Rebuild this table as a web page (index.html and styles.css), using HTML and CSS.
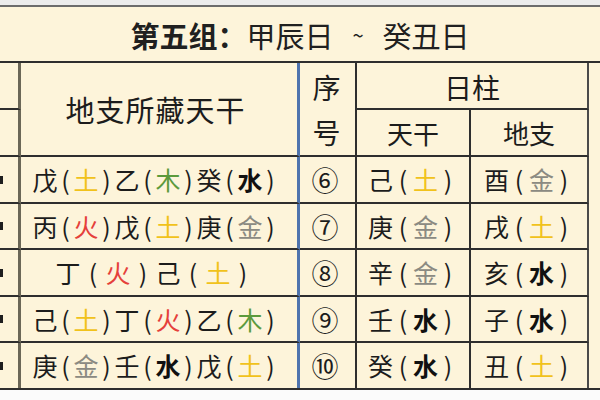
FILE: index.html
```html
<!DOCTYPE html>
<html lang="zh-CN">
<head>
<meta charset="utf-8">
<title>第五组：甲辰日 ~ 癸丑日</title>
<link rel="stylesheet" href="styles.css">
</head>
<body>
<div class="topbar"></div>
<div class="sheet">
  <div class="title"><b class="strong">第五组：</b>甲辰日<span class="tilde">~</span>癸丑日</div>
  <div class="grid">
    <div class="c0 h1"></div>
    <div class="hd-cang">地支所藏天干</div>
    <div class="hd-xu"><span>序</span><span>号</span></div>
    <div class="hd-rz">日柱</div>
    <div class="side"></div>
    <div class="c0 h2"></div>
    <div class="hd-sub gan">天干</div>
    <div class="hd-sub zhi">地支</div>

    <div class="c0"><span class="tick"></span></div>
    <div class="c1 mix">戊<span class="p">(</span><span class="tu">土</span><span class="p">)</span>乙<span class="p">(</span><span class="mu">木</span><span class="p">)</span>癸<span class="p">(</span><span class="shui">水</span><span class="p">)</span></div>
    <div class="c2">⑥</div>
    <div class="c3 pillar">己<span class="p">(</span><span class="tu">土</span><span class="p">)</span></div>
    <div class="c4 pillar">酉<span class="p">(</span><span class="jin">金</span><span class="p">)</span></div>

    <div class="c0"><span class="tick"></span></div>
    <div class="c1 mix">丙<span class="p">(</span><span class="huo">火</span><span class="p">)</span>戊<span class="p">(</span><span class="tu">土</span><span class="p">)</span>庚<span class="p">(</span><span class="jin">金</span><span class="p">)</span></div>
    <div class="c2">⑦</div>
    <div class="c3 pillar">庚<span class="p">(</span><span class="jin">金</span><span class="p">)</span></div>
    <div class="c4 pillar">戌<span class="p">(</span><span class="tu">土</span><span class="p">)</span></div>

    <div class="c0"><span class="tick"></span></div>
    <div class="c1 wide">丁<span class="p">(</span><span class="huo">火</span><span class="p">)</span>己<span class="p">(</span><span class="tu">土</span><span class="p">)</span></div>
    <div class="c2">⑧</div>
    <div class="c3 pillar">辛<span class="p">(</span><span class="jin">金</span><span class="p">)</span></div>
    <div class="c4 pillar">亥<span class="p">(</span><span class="shui">水</span><span class="p">)</span></div>

    <div class="c0"><span class="tick"></span></div>
    <div class="c1 mix">己<span class="p">(</span><span class="tu">土</span><span class="p">)</span>丁<span class="p">(</span><span class="huo">火</span><span class="p">)</span>乙<span class="p">(</span><span class="mu">木</span><span class="p">)</span></div>
    <div class="c2">⑨</div>
    <div class="c3 pillar">壬<span class="p">(</span><span class="shui">水</span><span class="p">)</span></div>
    <div class="c4 pillar">子<span class="p">(</span><span class="shui">水</span><span class="p">)</span></div>

    <div class="c0 last"><span class="tick"></span></div>
    <div class="c1 mix last">庚<span class="p">(</span><span class="jin">金</span><span class="p">)</span>壬<span class="p">(</span><span class="shui">水</span><span class="p">)</span>戊<span class="p">(</span><span class="tu">土</span><span class="p">)</span></div>
    <div class="c2 last">⑩</div>
    <div class="c3 pillar last">癸<span class="p">(</span><span class="shui">水</span><span class="p">)</span></div>
    <div class="c4 pillar last">丑<span class="p">(</span><span class="tu">土</span><span class="p">)</span></div>
  </div>
</div>
</body>
</html>
```

FILE: styles.css
```css
* { box-sizing: border-box; }

html, body {
  margin: 0;
  padding: 0;
  width: 600px;
  height: 400px;
  overflow: hidden;
  background: #fbfbfb;
  font-family: "Noto Sans CJK SC", "Noto Sans", sans-serif;
  color: #1c1c1c;
}

.topbar {
  height: 5px;
  background: #ececec;
}

.sheet {
  background: #fdf4da;
  border-top: 2px solid #6c6c6c;
}

.title {
  height: 54px;
  display: flex;
  align-items: center;
  justify-content: center;
  font-size: 29px;
  line-height: 1;
  font-weight: 400;
  color: #202020;
  padding-top: 2px;
}

.title .strong {
  font-weight: 700;
}

.title .tilde {
  display: inline-block;
  width: 49px;
  text-align: center;
  font-size: 20px;
}

.grid {
  display: grid;
  grid-template-columns: 21px 279px 57px 114px 118px 11px;
  grid-template-rows: 47px 47px 47px 46px 47px 46px 45px;
  border-top: 2px solid #2e2e2e;
  border-bottom: 2px solid #2e2e2e;
}

.grid > div {
  display: flex;
  align-items: center;
  justify-content: center;
  line-height: 1;
  white-space: nowrap;
}

/* row lines */
.c0, .c1, .c2, .c3, .c4,
.h1, .h2, .hd-cang, .hd-xu, .hd-rz, .hd-sub {
  border-bottom: 2px solid #2e2e2e;
}
.grid > .last { border-bottom: none; }

/* column lines */
.grid > .c0 {
  border-right: 3px solid #6b6757;
  justify-content: flex-start;
}
.c1, .hd-cang {
  border-right: 3px solid #4f74ae;
  padding-right: 7px;
}
.c2, .hd-xu { border-right: 2px solid #2e2e2e; }
.c3, .gan { border-right: 2px solid #2e2e2e; }
.c4, .zhi, .hd-rz { border-right: 2px solid #4a4a4a; }

/* header placement */
.h1 { grid-column: 1; grid-row: 1; }
.h2 { grid-column: 1; grid-row: 2; }
.hd-cang {
  grid-column: 2;
  grid-row: 1 / span 2;
  font-size: 29px;
  letter-spacing: 1px;
}
.hd-xu {
  grid-column: 3;
  grid-row: 1 / span 2;
  flex-direction: column;
  gap: 17px;
  font-size: 28px;
  padding-right: 2px;
}
.hd-rz {
  grid-column: 4 / span 2;
  grid-row: 1;
  font-size: 28px;
  padding-top: 2px;
}
.side {
  grid-column: 6;
  grid-row: 1 / span 7;
}
.gan { grid-column: 4; grid-row: 2; font-size: 26px; }
.zhi { grid-column: 5; grid-row: 2; font-size: 26px; }

/* body cells */
.tick {
  display: block;
  width: 3px;
  height: 8px;
  background: #1e1e1e;
}

.c1, .c3, .c4 { font-size: 25px; }
.c2 {
  font-size: 27px;
  padding-right: 5px;
}

.p {
  display: inline-block;
  text-align: center;
  color: #1c1c1c;
}
.mix .p { width: 16px; }
.wide .p { width: 25px; }
.pillar .p { width: 20px; }

.tu { color: #f1c21b; }
.mu { color: #5c9a3c; }
.huo { color: #e5403a; }
.jin { color: #8b8a82; }
.shui { color: #111111; font-weight: 700; }
```
